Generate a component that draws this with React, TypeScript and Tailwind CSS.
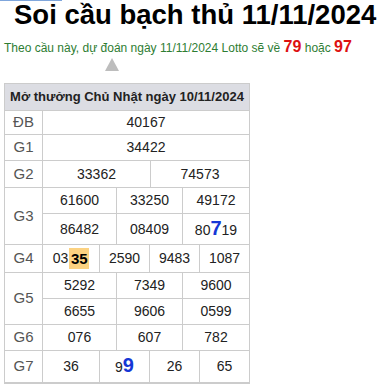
import React from 'react';

const Num = ({ children }: { children: React.ReactNode }) => (
  <span className="text-[14px] text-[#222]">{children}</span>
);

const Big = ({ children }: { children: React.ReactNode }) => (
  <span className="text-[20px] font-bold leading-none text-[#1537d6]">{children}</span>
);

// widths incl. right border, last cell fills the rest
const widths: Record<number, string[]> = {
  1: ['flex-1'],
  2: ['w-[108px] border-r', 'flex-1'],
  3: ['w-[74px] border-r', 'w-[66px] border-r', 'flex-1'],
  4: ['w-[57px] border-r', 'w-[50px] border-r', 'w-[50px] border-r', 'flex-1'],
};

const Row = ({ cells, h, last }: { cells: React.ReactNode[]; h: string; last?: boolean }) => (
  <div className={`flex ${h} ${last ? '' : 'border-b'} border-[#cccccc]`}>
    {cells.map((c, i) => (
      <div
        key={i}
        className={`${widths[cells.length][i]} border-[#cccccc] flex items-center justify-center`}
      >
        <Num>{c}</Num>
      </div>
    ))}
  </div>
);

const Prize = ({
  label,
  rows,
  last,
}: {
  label: string;
  rows: { cells: React.ReactNode[]; h: string }[];
  last?: boolean;
}) => (
  <div className={`flex ${last ? '' : 'border-b'} border-[#cccccc]`}>
    <div className="w-[38px] border-r border-[#cccccc] flex items-center justify-center text-[15px] text-[#555]">
      {label}
    </div>
    <div className="flex-1 flex flex-col">
      {rows.map((r, i) => (
        <Row key={i} cells={r.cells} h={r.h} last={i === rows.length - 1} />
      ))}
    </div>
  </div>
);

export default function App() {
  return (
    <div
      className="relative w-[383px] h-[390px] bg-white overflow-hidden"
      style={{ fontFamily: '"Liberation Sans", Arial, sans-serif' }}
    >
      <div className="absolute left-0 top-0 w-[62px] h-px bg-[#7fa6dc]" />
      <h1 className="pl-[14px] text-[27.5px] font-bold leading-[30px] text-black whitespace-nowrap">
        Soi cầu bạch thủ 11/11/2024
      </h1>
      <p className="mt-[9px] pl-[4px] text-[12px] leading-[16px] text-[#2e7d32] whitespace-nowrap">
        Theo cầu này, dự đoán ngày 11/11/2024 Lotto sẽ về{' '}
        <span className="text-[16px] font-bold text-[#dd1111]">79</span> hoặc{' '}
        <span className="text-[16px] font-bold text-[#dd1111]">97</span>
      </p>
      <div className="mt-[2px] ml-[105px] w-0 h-0 border-l-[7.5px] border-r-[7.5px] border-b-[13px] border-l-transparent border-r-transparent border-b-[#bdbdbd]" />

      <div className="mt-[12px] ml-[4px] w-[246px] border-l border-r border-t border-b-2 border-[#cccccc]">
        <div className="h-[27px] bg-[#dcdde3] border-b border-[#cccccc] flex items-center justify-center text-[13px] font-bold text-[#222] whitespace-nowrap">
          Mở thưởng Chủ Nhật ngày 10/11/2024
        </div>
        <Prize label="ĐB" rows={[{ cells: ['40167'], h: 'h-[23px]' }]} />
        <Prize label="G1" rows={[{ cells: ['34422'], h: 'h-[25px]' }]} />
        <Prize label="G2" rows={[{ cells: ['33362', '74573'], h: 'h-[26px]' }]} />
        <Prize
          label="G3"
          rows={[
            { cells: ['61600', '33250', '49172'], h: 'h-[26px]' },
            {
              cells: [
                '86482',
                '08409',
                <>
                  80<Big>7</Big>19
                </>,
              ],
              h: 'h-[30px]',
            },
          ]}
        />
        <Prize
          label="G4"
          rows={[
            {
              cells: [
                <>
                  03
                  <span className="inline-flex items-center justify-center ml-[1px] w-[20px] h-[21px] bg-[#fcd281] text-[15px] font-bold text-black align-middle">
                    35
                  </span>
                </>,
                '2590',
                '9483',
                '1087',
              ],
              h: 'h-[27px]',
            },
          ]}
        />
        <Prize
          label="G5"
          rows={[
            { cells: ['5292', '7349', '9600'], h: 'h-[26px]' },
            { cells: ['6655', '9606', '0599'], h: 'h-[25px]' },
          ]}
        />
        <Prize label="G6" rows={[{ cells: ['076', '607', '782'], h: 'h-[25px]' }]} />
        <Prize
          label="G7"
          last
          rows={[
            {
              cells: [
                '36',
                <>
                  9<Big>9</Big>
                </>,
                '26',
                '65',
              ],
              h: 'h-[31px]',
            },
          ]}
        />
      </div>
    </div>
  );
}
